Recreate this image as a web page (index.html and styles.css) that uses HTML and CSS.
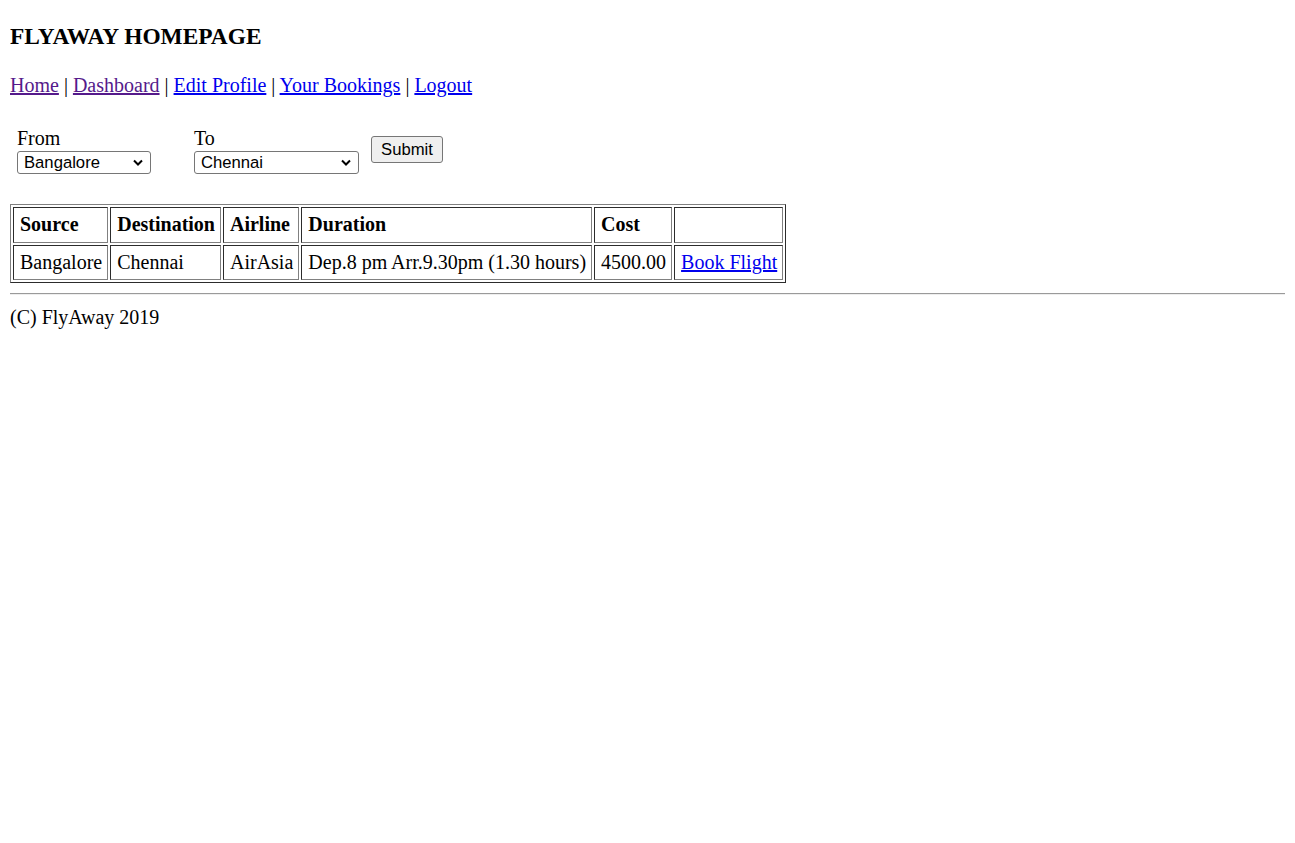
FILE: index.html
```html
<!DOCTYPE html>
<html>
<head>
<meta charset="utf-8">
<title>FlyAway</title>
<link rel="stylesheet" href="styles.css">
</head>
<body>
<h3 class="title">FLYAWAY HOMEPAGE</h3>
<p class="nav"><a href="#" class="visited">Home</a> | <a href="#" class="visited">Dashboard</a> | <a href="#">Edit Profile</a> | <a href="#">Your Bookings</a> | <a href="#">Logout</a></p>
<form class="search">
  <div class="field field-from">
    <label class="label">From</label>
    <div class="select-wrap">
      <select class="select select-from"><option>Bangalore</option></select>
      <svg class="chev" width="10" height="7" viewBox="0 0 10 7"><path d="M1 1.5 L5 5.5 L9 1.5" fill="none" stroke="#000" stroke-width="2"/></svg>
    </div>
  </div>
  <div class="field field-to">
    <label class="label">To</label>
    <div class="select-wrap">
      <select class="select select-to"><option>Chennai</option></select>
      <svg class="chev" width="10" height="7" viewBox="0 0 10 7"><path d="M1 1.5 L5 5.5 L9 1.5" fill="none" stroke="#000" stroke-width="2"/></svg>
    </div>
  </div>
  <button type="button" class="submit">Submit</button>
</form>
<table class="results">
  <tr class="head-row">
    <th>Source</th><th>Destination</th><th>Airline</th><th>Duration</th><th>Cost</th><th></th>
  </tr>
  <tr>
    <td>Bangalore</td><td>Chennai</td><td>AirAsia</td><td>Dep.8 pm Arr.9.30pm (1.30 hours)</td><td>4500.00</td><td><a href="#">Book Flight</a></td>
  </tr>
</table>
<hr class="rule">
<div class="footer">(C) FlyAway 2019</div>
</body>
</html>
```
FILE: styles.css
```css
html, body {
  background: #fff;
}
html {
  margin: 0;
  padding: 0;
}
body {
  margin: 0 10px 10px;
  padding: 0;
  font-family: "Liberation Serif", "Times New Roman", serif;
  font-size: 20px;
  color: #000;
}
a {
  color: #0000ee;
}
a.visited {
  color: #551a8b;
}
.title {
  font-size: 23.4px;
  font-weight: bold;
  margin: 23.4px 0;
}
.nav {
  margin: 0;
  line-height: 23px;
}
.search {
  display: flex;
  align-items: center;
  margin: 30px 0 0 7px;
  height: 48px;
}
.field {
  display: flex;
  flex-direction: column;
  align-items: flex-start;
}
.field-from {
  width: 177px;
}
.field-to {
  width: 177px;
}
.label {
  line-height: 23px;
  height: 24px;
}
.select-wrap {
  position: relative;
  display: flex;
}
.select {
  -webkit-appearance: none;
  appearance: none;
  font-family: "Liberation Sans", Arial, sans-serif;
  font-size: 16.67px;
  height: 23px;
  border: 1px solid #767676;
  border-radius: 3px;
  background: #fff;
  color: #000;
  padding: 0 20px 0 6px;
}
.chev {
  position: absolute;
  right: 8px;
  top: 8px;
  pointer-events: none;
}
.select-from {
  width: 134px;
}
.select-to {
  width: 165px;
}
.submit {
  font-family: "Liberation Sans", Arial, sans-serif;
  font-size: 16.67px;
  height: 27px;
  width: 72px;
  margin-top: -2px;
  padding: 0;
  background: #efefef;
  border: 1px solid #767676;
  border-radius: 3px;
  color: #000;
}
.results {
  margin-top: 29px;
  border: 1px outset gray;
  border-spacing: 2.5px;
}
.results th,
.results td {
  border: 1px inset gray;
  padding: 5px 5px 5px 6px;
  text-align: left;
  line-height: 23px;
  height: 23px;
}
.head-row th {
  padding-bottom: 6px;
}
.rule {
  margin: 10px 0 11px;
  border: 0;
  border-top: 1px solid #9a9a9a;
  border-bottom: 1px solid #eee;
  height: 0;
}
.footer {
  line-height: 23px;
}
```
